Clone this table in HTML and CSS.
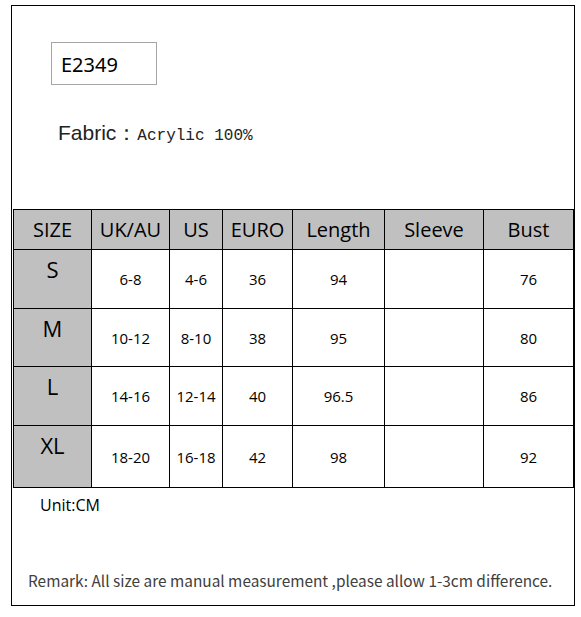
FILE: index.html
```html
<!DOCTYPE html>
<html>
<head>
<meta charset="utf-8">
<link rel="stylesheet" href="styles.css">
</head>
<body>
<div class="sheet">
  <div class="code">E2349</div>
  <div class="fabric"><span class="label">Fabric：</span><span class="value">Acrylic 100%</span></div>
  <table class="sizes">
    <colgroup>
      <col class="c1"><col class="c2"><col class="c3"><col class="c4"><col class="c5"><col class="c6"><col class="c7">
    </colgroup>
    <thead>
      <tr class="head">
        <th>SIZE</th><th>UK/AU</th><th>US</th><th>EURO</th><th>Length</th><th>Sleeve</th><th>Bust</th>
      </tr>
    </thead>
    <tbody>
      <tr class="r1"><th>S</th><td>6-8</td><td>4-6</td><td>36</td><td>94</td><td></td><td>76</td></tr>
      <tr class="r2"><th>M</th><td>10-12</td><td>8-10</td><td>38</td><td>95</td><td></td><td>80</td></tr>
      <tr class="r3"><th>L</th><td>14-16</td><td>12-14</td><td>40</td><td>96.5</td><td></td><td>86</td></tr>
      <tr class="r4"><th>XL</th><td>18-20</td><td>16-18</td><td>42</td><td>98</td><td></td><td>92</td></tr>
    </tbody>
  </table>
  <div class="unit">Unit:CM</div>
  <div class="remark">Remark: All size are manual measurement ,please allow 1-3cm difference.</div>
</div>
</body>
</html>
```

FILE: styles.css
```css
html, body {
  margin: 0;
  padding: 0;
  background: #ffffff;
}

.sheet {
  box-sizing: border-box;
  margin: 5px 0 0 11px;
  width: 564px;
  height: 601px;
  border: 1px solid #000;
  display: flex;
  flex-direction: column;
  align-items: flex-start;
}

.code {
  box-sizing: border-box;
  margin: 36px 0 0 39px;
  width: 106px;
  height: 43px;
  border: 1px solid #a6a6a6;
  padding: 3px 0 0 9px;
  font-family: "Noto Sans", sans-serif;
  font-size: 20px;
  line-height: 38px;
  color: #000;
}

.fabric {
  margin: 36px 0 0 46px;
  line-height: 24px;
  color: #222;
  white-space: nowrap;
}

.fabric .label {
  font-family: "Liberation Sans", Arial, sans-serif;
  font-size: 21px;
}

.fabric .value {
  font-family: "Liberation Mono", monospace;
  font-size: 16px;
}

.sizes {
  margin: 61px 0 0 1px;
  border-collapse: separate;
  border-spacing: 0;
  table-layout: fixed;
  width: 561px;
  border-top: 1px solid #000;
  border-left: 1px solid #000;
}

.sizes .c1 { width: 78px; }
.sizes .c2 { width: 78px; }
.sizes .c3 { width: 53px; }
.sizes .c4 { width: 70px; }
.sizes .c5 { width: 92px; }
.sizes .c6 { width: 99px; }
.sizes .c7 { width: 90px; }

.sizes th,
.sizes td {
  box-sizing: border-box;
  border-right: 1px solid #000;
  border-bottom: 1px solid #000;
  padding: 0;
  text-align: center;
  color: #000;
  font-family: "Open Sans", sans-serif;
  font-weight: normal;
}

.sizes .head th {
  height: 40px;
  background: #c0c0c0;
  font-size: 20px;
  vertical-align: middle;
}

.sizes tbody th {
  background: #c0c0c0;
  font-size: 22px;
  line-height: 30px;
  vertical-align: top;
  padding-top: 4px;
}

.sizes tbody td {
  font-size: 15px;
  vertical-align: middle;
}

.sizes .r1 th, .sizes .r1 td { height: 59px; }
.sizes .r2 th, .sizes .r2 td { height: 58px; }
.sizes .r3 th, .sizes .r3 td { height: 59px; }
.sizes .r4 th, .sizes .r4 td { height: 62px; }

.unit {
  margin: 6px 0 0 28px;
  font-family: "Open Sans", sans-serif;
  font-size: 16px;
  line-height: 22px;
  color: #000;
}

.remark {
  margin: 54px 0 0 16px;
  font-family: "Noto Sans CJK SC", "Noto Sans", sans-serif;
  font-size: 15.4px;
  line-height: 20px;
  color: #404040;
  white-space: nowrap;
}
```
